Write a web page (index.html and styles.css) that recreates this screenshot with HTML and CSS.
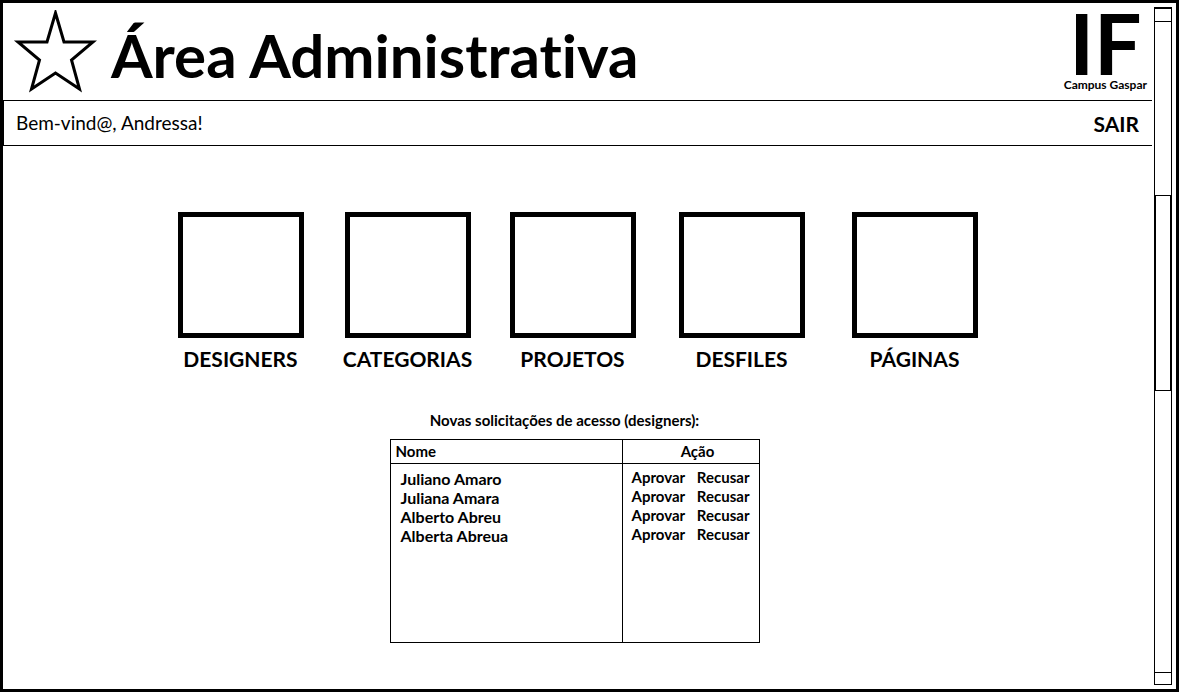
FILE: index.html
```html
<!DOCTYPE html>
<html lang="pt-BR">
<head>
<meta charset="utf-8">
<meta name="viewport" content="width=device-width, initial-scale=1">
<title>Área Administrativa</title>
<link rel="stylesheet" href="styles.css">
</head>
<body>
<div class="frame">
  <div class="page">
    <header class="header">
      <svg class="star" viewBox="0 0 84 84" aria-hidden="true">
        <path d="M42.5 3 L51 32 H80 L58.5 50 L66.5 79 L42.5 63 L18.5 79 L26.5 50 L5 32 H34 Z" fill="none" stroke="#000" stroke-width="3"/>
      </svg>
      <h1 class="title">Área Administrativa</h1>
      <div class="brand">
        <span class="brand-name">IF</span>
        <span class="brand-campus">Campus Gaspar</span>
      </div>
    </header>
    <div class="userbar">
      <span class="welcome">Bem-vind@, Andressa!</span>
      <a class="logout" href="#">SAIR</a>
    </div>
    <main class="content">
      <nav class="tiles">
        <a class="tile" href="#"><span class="tile-box"></span>DESIGNERS</a>
        <a class="tile" href="#"><span class="tile-box"></span>CATEGORIAS</a>
        <a class="tile" href="#"><span class="tile-box"></span>PROJETOS</a>
        <a class="tile" href="#"><span class="tile-box"></span>DESFILES</a>
        <a class="tile" href="#"><span class="tile-box"></span>PÁGINAS</a>
      </nav>
      <table class="requests">
        <caption>Novas solicitações de acesso (designers):</caption>
        <thead>
          <tr><th scope="col">Nome</th><th scope="col" class="action-head">Ação</th></tr>
        </thead>
        <tbody>
          <tr><td>Juliano Amaro</td><td><div class="actions"><button type="button">Aprovar</button><button type="button">Recusar</button></div></td></tr>
          <tr><td>Juliana Amara</td><td><div class="actions"><button type="button">Aprovar</button><button type="button">Recusar</button></div></td></tr>
          <tr><td>Alberto Abreu</td><td><div class="actions"><button type="button">Aprovar</button><button type="button">Recusar</button></div></td></tr>
          <tr><td>Alberta Abreua</td><td><div class="actions"><button type="button">Aprovar</button><button type="button">Recusar</button></div></td></tr>
        </tbody>
        <tfoot>
          <tr class="filler"><td></td><td></td></tr>
        </tfoot>
      </table>
    </main>
  </div>
  <div class="scrollbar" aria-hidden="true">
    <div class="scroll-up"></div>
    <div class="scroll-before"></div>
    <div class="scroll-thumb"></div>
    <div class="scroll-after"></div>
    <div class="scroll-down"></div>
  </div>
</div>
</body>
</html>
```
FILE: styles.css
```css
* { box-sizing: border-box; }
body {
  margin: 0;
  background: #fff;
  color: #000;
  font-family: Lato, "Open Sans", sans-serif;
  font-variant-ligatures: none;
}
a { color: inherit; text-decoration: none; }
.frame {
  display: flex;
  gap: 2px;
  min-height: 100vh;
  padding-right: 4px;
  border: 3px solid #000;
}
.page { flex: 1; }
.header {
  display: flex;
  align-items: center;
  height: 97px;
  padding: 0 5px 0 10px;
}
.star { width: 84px; height: 84px; }
.title {
  flex: 1;
  margin: 0;
  padding: 6px 0 0 14px;
  font-size: 60px;
  line-height: 64px;
  font-weight: 700;
}
.brand {
  display: flex;
  flex-direction: column;
  align-items: center;
}
.brand-name {
  font-size: 84px;
  line-height: 66px;
  font-weight: 700;
}
.brand-campus {
  font-size: 12px;
  line-height: 18px;
  font-weight: 700;
}
.userbar {
  display: flex;
  align-items: center;
  justify-content: space-between;
  height: 46px;
  padding: 0 13px 0 12px;
  border: solid #000;
  border-width: 1px 0 1px 1px;
}
.welcome { font-size: 19px; line-height: 24px; }
.logout {
  padding-top: 2px;
  font-size: 21px;
  line-height: 24px;
  font-weight: 700;
}
.content {
  display: flex;
  flex-direction: column;
  align-items: center;
  padding-top: 66px;
}
.tiles {
  display: grid;
  grid-template-columns: 167px 165px 169px 173px 126px;
}
.tile {
  display: flex;
  flex-direction: column;
  align-items: center;
  gap: 7px;
  width: 126px;
  font-size: 21px;
  line-height: 28px;
  font-weight: 700;
  white-space: nowrap;
}
.tile-box {
  width: 126px;
  height: 126px;
  border: 5px solid #000;
}
.requests {
  width: 370px;
  margin-top: 38px;
  margin-right: 6px;
  border: 1px solid #000;
  border-spacing: 0;
  table-layout: fixed;
  font-size: 15px;
  line-height: 19px;
  font-weight: 700;
}
.requests caption { padding: 0 20px 9px 0; }
.requests th {
  height: 24px;
  padding: 0 5px;
  border-bottom: 1px solid #000;
  text-align: left;
}
.requests th:first-child { width: 232px; }
.requests .action-head { padding-left: 19px; text-align: center; }
.requests td { height: 19px; padding: 0 9px; }
.requests th:first-child,
.requests td:first-child { border-right: 1px solid #000; }
.requests tbody td:first-child { padding-left: 10px; font-size: 16px; }
.requests tbody tr:first-child td { height: 24px; padding-top: 5px; }
.requests .filler td { height: 97px; }
.actions {
  display: flex;
  justify-content: space-between;
  padding-bottom: 3px;
}
.actions button {
  padding: 0;
  border: 0;
  background: none;
  color: inherit;
  font: inherit;
  line-height: 16px;
  cursor: pointer;
}
.scrollbar {
  display: flex;
  flex-direction: column;
  width: 18px;
  margin: 4px 0;
  border: 1px solid #000;
  border-top-width: 2px;
}
.scroll-up { height: 13px; border-bottom: 1px solid #000; }
.scroll-before { flex: 174; }
.scroll-thumb { flex: 195; border: 1px solid #000; }
.scroll-after { flex: 282; }
.scroll-down { height: 12px; border-top: 1px solid #000; }
```
